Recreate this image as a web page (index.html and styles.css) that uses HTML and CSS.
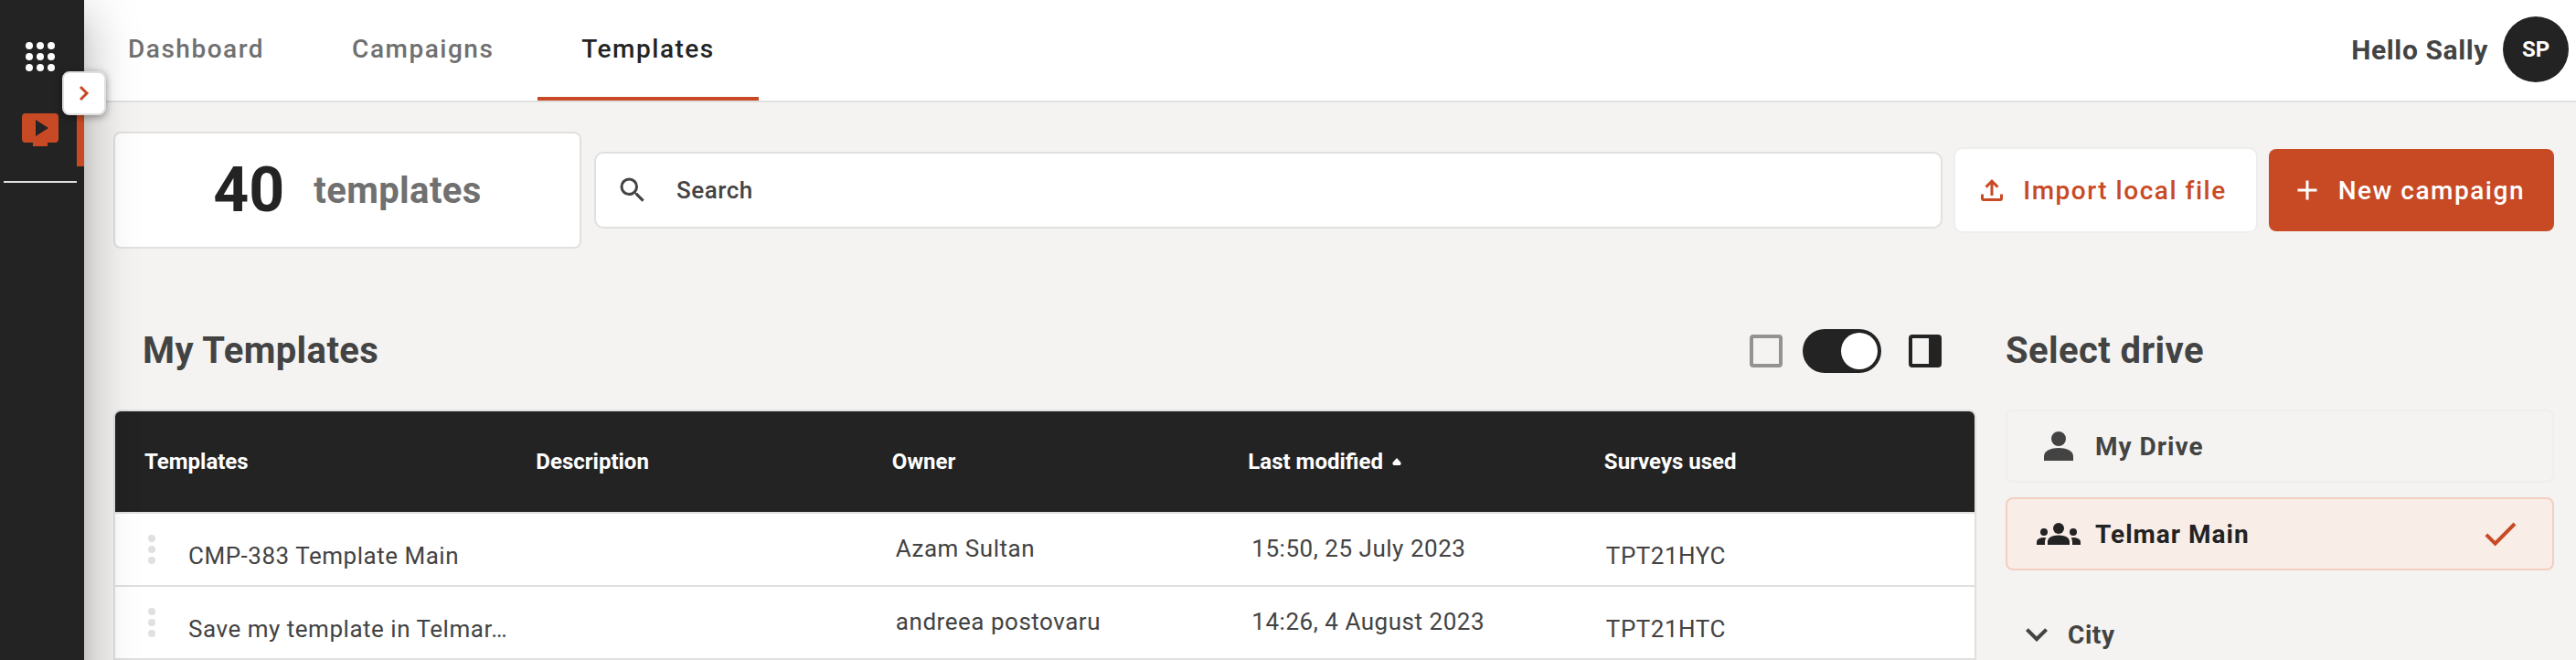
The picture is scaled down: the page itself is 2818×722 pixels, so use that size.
FILE: index.html
```
<!DOCTYPE html>
<html lang="en">
<head>
<meta charset="utf-8">
<meta name="viewport" content="width=device-width, initial-scale=1">
<title>Templates</title>
<link rel="stylesheet" href="styles.css">
</head>
<body>
<div class="app">
  <aside class="sidebar">
    <button class="nav-button apps" type="button" aria-label="Apps">
      <svg width="48" height="48" viewBox="0 0 24 24" fill="currentColor"><circle cx="6" cy="6" r="2"/><circle cx="12" cy="6" r="2"/><circle cx="18" cy="6" r="2"/><circle cx="6" cy="12" r="2"/><circle cx="12" cy="12" r="2"/><circle cx="18" cy="12" r="2"/><circle cx="6" cy="18" r="2"/><circle cx="12" cy="18" r="2"/><circle cx="18" cy="18" r="2"/></svg>
    </button>
    <button class="nav-button current" type="button" aria-label="Planner">
      <svg width="40" height="36" viewBox="0 0 40 36"><path fill="currentColor" fill-rule="evenodd" d="M4 0H36A4 4 0 0 1 40 4V28A4 4 0 0 1 36 32H28V36H12V32H4A4 4 0 0 1 0 28V4A4 4 0 0 1 4 0ZM15 7V25L29 16Z"/></svg>
    </button>
    <hr class="divider">
    <button class="expand" type="button" aria-label="Expand menu">
      <svg width="32" height="32" viewBox="0 0 32 32" fill="none" stroke="currentColor" stroke-width="3"><path d="M12 9L19 16L12 23"/></svg>
    </button>
  </aside>

  <div class="page">
    <header class="header">
      <nav class="tabs">
        <a class="tab" href="#dashboard">Dashboard</a>
        <a class="tab" href="#campaigns">Campaigns</a>
        <a class="tab active" href="#templates" aria-current="page">Templates</a>
      </nav>
      <div class="user">
        <span class="greeting">Hello Sally</span>
        <button class="avatar" type="button">SP</button>
      </div>
    </header>

    <main class="content">
      <div class="toolbar">
        <div class="counter"><strong class="count">40</strong><span class="count-label">templates</span></div>
        <label class="search">
          <svg width="36" height="36" viewBox="0 0 24 24" fill="currentColor"><path d="M15.5 14h-.79l-.28-.27A6.47 6.47 0 0 0 16 9.500A6.500 6.500 0 1 0 9.500 16c1.610 0 3.090-.59 4.230-1.570l.27.28v.79l5 4.990L20.490 19zm-6 0a4.500 4.500 0 1 1 0-9a4.500 4.500 0 0 1 0 9z"/></svg>
          <input class="search-input" type="search" placeholder="Search" aria-label="Search">
        </label>
        <button class="button outline" type="button">
          <svg width="36" height="36" viewBox="0 0 24 24" fill="currentColor"><path d="M11 16V7.850l-2.600 2.600L7 9l5-5l5 5l-1.400 1.450l-2.600-2.600V16zm-5 4a2 2 0 0 1-2-2v-3h2v3h12v-3h2v3a2 2 0 0 1-2 2z"/></svg>
          Import local file
        </button>
        <button class="button primary" type="button">
          <svg width="36" height="36" viewBox="0 0 24 24" fill="currentColor"><path d="M19 13h-6v6h-2v-6H5v-2h6V5h2v6h6z"/></svg>
          New campaign
        </button>
      </div>

      <div class="columns">
        <section class="templates">
          <div class="section-head">
            <h2 class="title">My Templates</h2>
            <div class="layout-switch">
              <svg class="icon-single" width="48" height="48" viewBox="0 0 48 48" fill="none" stroke="currentColor" stroke-width="4"><rect x="8" y="8" width="32" height="32" rx="2"/></svg>
              <input class="switch" type="checkbox" role="switch" aria-label="Show side panel" checked>
              <svg class="icon-split" width="48" height="48" viewBox="0 0 48 48" fill="currentColor"><path fill-rule="evenodd" d="M10 6H38A4 4 0 0 1 42 10V38A4 4 0 0 1 38 42H10A4 4 0 0 1 6 38V10A4 4 0 0 1 10 6ZM10 10V38H28V10Z"/></svg>
            </div>
          </div>
          <div class="table-frame">
            <table class="table">
              <colgroup><col class="col-name"><col class="col"><col class="col"><col class="col"><col></colgroup>
              <thead>
                <tr><th scope="col">Templates</th><th scope="col">Description</th><th scope="col">Owner</th><th scope="col" aria-sort="ascending">Last modified <svg class="sort" width="10" height="8" viewBox="0 0 10 8" fill="currentColor"><path d="M5 0L9.500 5Q10 8 8 8H2Q0 8 .5 5Z"/></svg></th><th scope="col">Surveys used</th></tr>
              </thead>
              <tbody>
                <tr>
                  <td class="name-column"><div class="name-cell"><button class="more" type="button" aria-label="More actions"><svg width="8" height="32" viewBox="0 0 8 32" fill="currentColor"><circle cx="4" cy="4" r="4"/><circle cx="4" cy="16" r="4"/><circle cx="4" cy="28" r="4"/></svg></button><span class="name">CMP-383 Template Main</span></div></td>
                  <td></td><td>Azam Sultan</td><td>15:50, 25 July 2023</td><td class="survey">TPT21HYC</td>
                </tr>
                <tr>
                  <td class="name-column"><div class="name-cell"><button class="more" type="button" aria-label="More actions"><svg width="8" height="32" viewBox="0 0 8 32" fill="currentColor"><circle cx="4" cy="4" r="4"/><circle cx="4" cy="16" r="4"/><circle cx="4" cy="28" r="4"/></svg></button><span class="name">Save my template in Telmar…</span></div></td>
                  <td></td><td>andreea postovaru</td><td>14:26, 4 August 2023</td><td class="survey">TPT21HTC</td>
                </tr>
              </tbody>
            </table>
          </div>
        </section>

        <aside class="drives">
          <div class="section-head"><h2 class="title">Select drive</h2></div>
          <div class="drive-list">
            <button class="drive" type="button">
              <svg width="48" height="48" viewBox="0 0 24 24" fill="currentColor"><path d="M12 12a4 4 0 1 0 0-8a4 4 0 0 0 0 8zm0 1c-4 0-8 1.500-8 4.500V20h16v-2.500C20 14.500 16 13 12 13z"/></svg>
              My Drive
            </button>
            <button class="drive selected" type="button" aria-pressed="true">
              <svg width="48" height="48" viewBox="0 0 24 24" fill="currentColor"><circle cx="12" cy="9" r="3"/><circle cx="4" cy="11" r="2"/><circle cx="20" cy="11" r="2"/><path d="M12 12.750c1.630 0 3.070.39 4.240.9c1.080.48 1.760 1.560 1.760 2.730V18H6v-1.610c0-1.180.68-2.260 1.760-2.730c1.170-.52 2.610-.91 4.240-.91zM5.130 14.100A6.500 6.500 0 0 0 4 14c-.99 0-1.930.21-2.780.58A2.010 2.010 0 0 0 0 16.430V18h4.500v-1.610c0-.83.23-1.610.63-2.290zM18.870 14.100A6.500 6.500 0 0 1 20 14c.99 0 1.930.21 2.780.58A2.010 2.010 0 0 1 24 16.430V18h-4.500v-1.610c0-.83-.23-1.610-.63-2.290z"/></svg>
              Telmar Main
              <svg class="check" width="48" height="48" viewBox="0 0 24 24" fill="currentColor"><path d="M8.800 15.900L4.600 11.700L3.200 13.100L8.800 18.700L20.200 7.200L18.800 5.800z"/></svg>
            </button>
          </div>
          <button class="folder" type="button" aria-expanded="false">
            <svg width="48" height="48" viewBox="0 0 24 24" fill="currentColor"><path d="M7.410 8.590L12 13.170l4.590-4.580L18 10l-6 6l-6-6z"/></svg>
            City
          </button>
        </aside>
      </div>
    </main>
  </div>
</div>
</body>
</html>
```

FILE: styles.css
```
:root {
  --dark: #232323;
  --text: #434343;
  --muted: #707070;
  --accent: #c84a25;
  --line: #e0e0e0;
  --surface: #f4f3f1;
}

* { box-sizing: border-box; }

body {
  margin: 0;
  background: var(--surface);
  color: var(--text);
  font-family: Roboto, "Noto Sans", sans-serif;
  font-size: 26px;
}

button {
  border: 0;
  padding: 0;
  background: none;
  color: inherit;
  font: inherit;
  cursor: pointer;
}

svg { display: block; flex: none; }

.app { display: flex; min-height: 100vh; overflow: hidden; }

/* Sidebar */
.sidebar {
  position: relative;
  z-index: 2;
  flex: none;
  width: 92px;
  padding-top: 22px;
}

/* Backdrop runs past the bottom edge so its shadow stays even */
.sidebar::before {
  position: absolute;
  z-index: -1;
  inset: 0 0 -80px;
  background: var(--dark);
  box-shadow:
    0 16px 20px -10px rgba(0, 0, 0, 0.2),
    0 32px 48px 4px rgba(0, 0, 0, 0.14),
    0 12px 60px 10px rgba(0, 0, 0, 0.12);
  content: "";
}

.nav-button {
  display: grid;
  place-items: center;
  width: 100%;
  height: 80px;
  padding-right: 4px;
  color: #fff;
}

.nav-button.current {
  border-right: 8px solid var(--accent);
  padding-left: 4px;
  padding-right: 0;
  color: var(--accent);
}

.divider {
  width: 80px;
  height: 2px;
  margin: 16px 0 0 4px;
  border: 0;
  background: var(--line);
}

.expand {
  position: absolute;
  top: 78px;
  right: -24px;
  display: grid;
  place-items: center;
  width: 48px;
  height: 48px;
  border: 2px solid var(--line);
  border-radius: 8px;
  background: #fff;
  color: var(--accent);
  box-shadow: 0 2px 8px rgba(0, 0, 0, 0.4);
}

.page { flex: 1; min-width: 0; }

/* Header */
.header {
  display: flex;
  justify-content: space-between;
  height: 112px;
  padding-right: 8px;
  border-bottom: 2px solid var(--line);
  background: #fff;
}

.tabs { display: flex; }

.tab {
  display: flex;
  align-items: center;
  padding: 0 48px;
  border-bottom: 4px solid transparent;
  color: var(--muted);
  font-size: 28px;
  font-weight: 500;
  letter-spacing: 0.054em;
  text-decoration: none;
}

.tab.active { border-color: var(--accent); color: var(--dark); }

.user { display: flex; align-items: center; gap: 16px; padding-bottom: 2px; }

.greeting { font-size: 30px; font-weight: 700; letter-spacing: 0.02em; }

.avatar {
  width: 72px;
  height: 72px;
  border-radius: 50%;
  background: var(--dark);
  color: #fff;
  font-size: 24px;
  font-weight: 700;
}

/* Toolbar */
.content { padding: 32px 24px 0 32px; }

.toolbar { display: flex; align-items: center; gap: 14px; }

.counter {
  display: flex;
  align-items: center;
  justify-content: center;
  gap: 32px;
  width: 512px;
  height: 128px;
  border: 2px solid var(--line);
  border-radius: 8px;
  background: #fff;
}

.count { color: var(--dark); font-size: 68px; }

.count-label {
  color: var(--muted);
  font-size: 40px;
  font-weight: 700;
  letter-spacing: 0.01em;
}

.search {
  display: flex;
  flex: 1;
  align-items: center;
  gap: 30px;
  height: 84px;
  padding: 0 22px;
  border: 2px solid var(--line);
  border-radius: 10px;
  background: #fff;
}

.search-input {
  flex: 1;
  min-width: 0;
  border: 0;
  padding: 0;
  outline: 0;
  background: none;
  color: var(--text);
  font: inherit;
  font-weight: 500;
  letter-spacing: 0.02em;
}

.search-input::placeholder { color: var(--text); opacity: 1; }

.button {
  display: flex;
  flex: none;
  align-items: center;
  gap: 16px;
  height: 90px;
  padding: 0 32px 0 24px;
  border-radius: 8px;
  font-size: 28px;
  font-weight: 500;
  letter-spacing: 0.054em;
}

.outline {
  padding-left: 22px;
  background: #fff;
  color: var(--accent);
  box-shadow: 0 0 0 2px #eee;
}

.primary { background: var(--accent); color: #fff; }

/* Columns */
.columns { display: flex; gap: 32px; margin-top: 88px; }

.templates { flex: 1; min-width: 0; }

.section-head {
  display: flex;
  align-items: center;
  justify-content: space-between;
  height: 48px;
  margin-bottom: 40px;
}

.templates .section-head { padding: 0 32px; }

.title {
  margin: 0;
  font-size: 40px;
  font-weight: 700;
  letter-spacing: 0.01em;
  line-height: 48px;
}

.layout-switch { display: flex; align-items: center; }

.icon-single { color: #929292; }

.icon-split { color: var(--dark); }

.switch {
  display: flex;
  width: 86px;
  height: 48px;
  margin: 0 24px 0 16px;
  padding: 4px;
  border-radius: 24px;
  background: #929292;
  appearance: none;
  cursor: pointer;
}

.switch::before {
  width: 40px;
  height: 40px;
  border-radius: 50%;
  background: #fff;
  content: "";
}

.switch:checked { justify-content: flex-end; background: var(--dark); }

/* Table */
.table-frame {
  overflow: hidden;
  border: 2px solid var(--line);
  border-radius: 8px 8px 0 0;
}

.table {
  width: 100%;
  border-collapse: separate;
  border-spacing: 0;
  table-layout: fixed;
}

.col-name { width: 21.06%; }

.col { width: 19.15%; }

th {
  height: 110px;
  padding: 0 32px;
  background: var(--dark);
  color: #fff;
  font-size: 24px;
  font-weight: 700;
  text-align: left;
}

.sort { display: inline-block; margin-left: 4px; vertical-align: 4px; }

td {
  height: 80px;
  padding: 0 0 2px 36px;
  border-top: 2px solid var(--line);
  background: #fff;
  letter-spacing: 0.02em;
  white-space: nowrap;
}

.survey { padding: 14px 0 0 34px; }

.name-column { padding-bottom: 0; }

.name-cell { display: flex; align-items: center; gap: 36px; }

.more { color: var(--line); }

.name { padding-top: 14px; }

/* Drives */
.drives { flex: none; width: 600px; }

.drive-list { display: grid; gap: 16px; }

.drive {
  display: flex;
  align-items: center;
  gap: 16px;
  width: 100%;
  height: 80px;
  padding: 0 32px;
  border: 2px solid #eee;
  border-radius: 8px;
  font-size: 28px;
  font-weight: 700;
  letter-spacing: 1px;
}

.drive.selected {
  border-color: #f2cfbf;
  background: #f9ede8;
  color: var(--dark);
}

.check { margin-left: auto; color: var(--accent); }

.folder {
  display: flex;
  align-items: center;
  gap: 10px;
  height: 48px;
  margin: 46px 0 0 10px;
  font-size: 28px;
  font-weight: 700;
  letter-spacing: 0.02em;
}
```
